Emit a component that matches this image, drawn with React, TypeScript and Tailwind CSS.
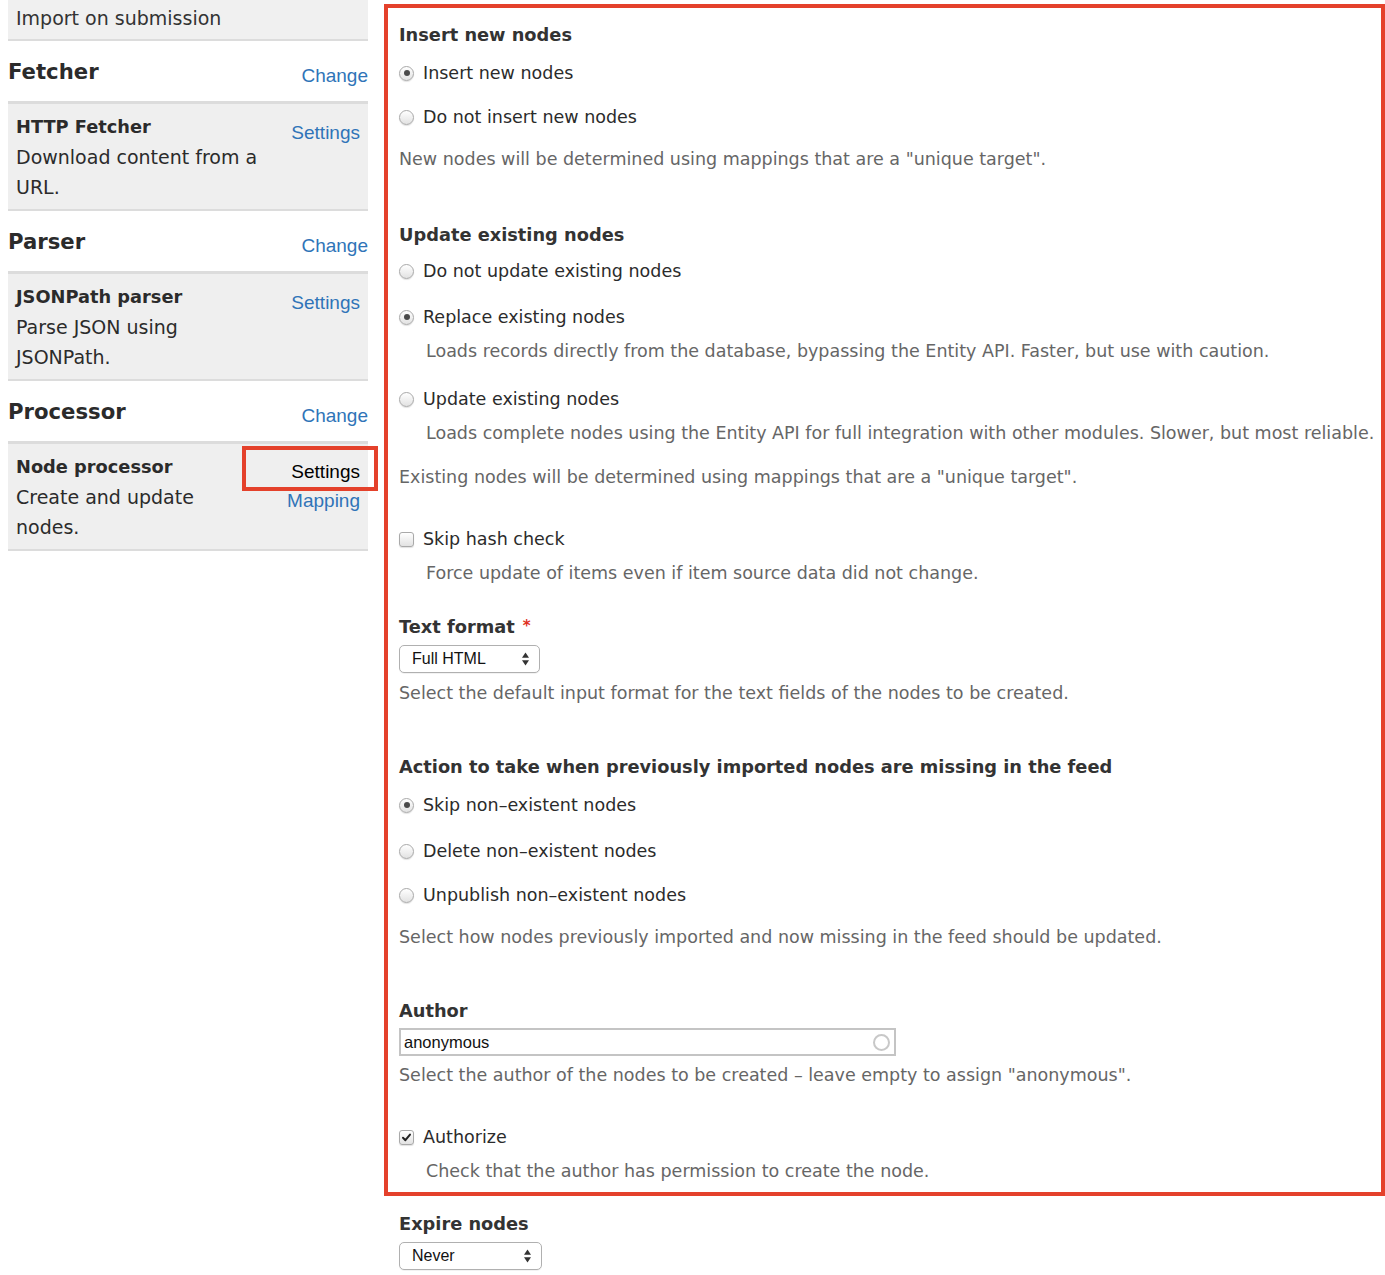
import React from 'react';

const Radio = ({ checked = false }: { checked?: boolean }) => (
    <span className="w-[15px] h-[15px] shrink-0 rounded-full border border-[#a9a9a9] bg-linear-to-b from-white to-[#e2e2e2] shadow-[0_1px_1px_rgba(0,0,0,0.12)] flex items-center justify-center">
        {checked && <span className="w-[6px] h-[6px] rounded-full bg-[#4a4a4a]" />}
    </span>
);

const Checkbox = ({ checked = false }: { checked?: boolean }) => (
    <span className="w-[15px] h-[15px] shrink-0 rounded-[3px] border border-[#a9a9a9] bg-linear-to-b from-white to-[#e2e2e2] shadow-[0_1px_1px_rgba(0,0,0,0.12)] flex items-center justify-center">
        {checked && (
            <svg width="11" height="11" viewBox="0 0 11 11">
                <path d="M2 5.8 L4.4 8.2 L9 2.6" fill="none" stroke="#222" strokeWidth="2" strokeLinecap="round" strokeLinejoin="round" />
            </svg>
        )}
    </span>
);

const Option = ({ label, checked, mt, box }: { label: string; checked?: boolean; mt: string; box?: boolean }) => (
    <div className={`h-6 flex items-center gap-[9px] text-[#2b2b2b] ${mt}`}>
        {box ? <Checkbox checked={checked} /> : <Radio checked={checked} />}
        <span>{label}</span>
    </div>
);

const Desc = ({ children, mt, indent }: { children: React.ReactNode; mt: string; indent?: boolean }) => (
    <div className={`h-6 flex items-center text-[#666] whitespace-nowrap ${indent ? 'pl-[27px]' : ''} ${mt}`}>{children}</div>
);

const Heading = ({ children, mt }: { children: React.ReactNode; mt: string }) => (
    <div className={`h-6 flex items-center font-bold text-[17.8px] text-[#333] ${mt}`}>{children}</div>
);

const Arrows = () => (
    <svg width="9" height="16" viewBox="0 0 9 16">
        <path d="M4.5 1.5 L8 6.8 L1 6.8 Z" fill="#333" />
        <path d="M4.5 14.5 L8 9.2 L1 9.2 Z" fill="#333" />
    </svg>
);

const Select = ({ value, w, mt }: { value: string; w: string; mt: string }) => (
    <div className={`h-[28px] ${w} ${mt} border border-[#b0b0b0] rounded-[5px] bg-white flex items-center justify-between pl-[12px] pr-[9px] font-['Liberation_Sans',Arial,sans-serif] text-[16px] text-[#111] shadow-[0_1px_0_rgba(0,0,0,0.05)]`}>
        <span>{value}</span>
        <Arrows />
    </div>
);

const SectionHeader = ({ title }: { title: string }) => (
    <div className="h-[60px] flex items-start justify-between">
        <span className="pt-[16px] leading-[30px] text-[21.2px] font-bold text-[#2b2b2b]">{title}</span>
        <a className="pt-[20px] leading-[30px] font-['Liberation_Sans',Arial,sans-serif] text-[19px] text-[#2f74b8]">Change</a>
    </div>
);

const Card = ({ title, lines, links }: { title: string; lines: string[]; links: React.ReactNode }) => (
    <div className="relative bg-[#efefef] border-t-[3px] border-b-2 border-[#dcdcdc] pt-[8px] pb-[7px] pl-[8px] pr-[8px] flex justify-between leading-[30px]">
        <div className="text-[#2b2b2b] whitespace-nowrap text-[19px]">
            <div className="font-bold text-[17.8px]">{title}</div>
            {lines.map((l) => (
                <div key={l}>{l}</div>
            ))}
        </div>
        <div className="flex flex-col items-end pt-[6px] font-['Liberation_Sans',Arial,sans-serif] text-[19px] leading-[30px]">{links}</div>
    </div>
);

export default function App() {
    return (
        <div className="w-[1385px] min-h-[1275px] bg-white font-['DejaVu_Sans',sans-serif] text-[17.5px] flex gap-[16px] pl-[8px]">
            {/* Left column */}
            <div className="w-[360px] shrink-0">
                <div className="h-[41px] bg-[#f0f0f0] border-b-2 border-[#dcdcdc] pl-[8px] flex items-center text-[19px] text-[#333] pb-[3px]">
                    Import on submission
                </div>
                <SectionHeader title="Fetcher" />
                <Card
                    title="HTTP Fetcher"
                    lines={['Download content from a', 'URL.']}
                    links={<a className="text-[#2f74b8]">Settings</a>}
                />
                <SectionHeader title="Parser" />
                <Card
                    title="JSONPath parser"
                    lines={['Parse JSON using', 'JSONPath.']}
                    links={<a className="text-[#2f74b8]">Settings</a>}
                />
                <SectionHeader title="Processor" />
                <Card
                    title="Node processor"
                    lines={['Create and update', 'nodes.']}
                    links={
                        <>
                            <a className="text-black relative -mt-[1px]">
                                Settings
                                <span className="absolute -left-[49px] -right-[18px] top-[-11px] bottom-[-4px] border-4 border-[#e4412b]" />
                            </a>
                            <a className="text-[#2f74b8] -mt-[1px]">Mapping</a>
                        </>
                    }
                />
            </div>

            {/* Right column */}
            <div className="flex-1">
                <div className="mt-[4px] border-4 border-[#e4412b] pl-[11px] pt-[15px] pb-[9px]">
                    <Heading mt="">Insert new nodes</Heading>
                    <Option label="Insert new nodes" checked mt="mt-[14px]" />
                    <Option label="Do not insert new nodes" mt="mt-[20px]" />
                    <Desc mt="mt-[18px]">New nodes will be determined using mappings that are a "unique target".</Desc>

                    <Heading mt="mt-[52px]">Update existing nodes</Heading>
                    <Option label="Do not update existing nodes" mt="mt-[12px]" />
                    <Option label="Replace existing nodes" checked mt="mt-[22px]" />
                    <Desc indent mt="mt-[10px]">
                        Loads records directly from the database, bypassing the Entity API. Faster, but use with caution.
                    </Desc>
                    <Option label="Update existing nodes" mt="mt-[24px]" />
                    <Desc indent mt="mt-[10px]">
                        Loads complete nodes using the Entity API for full integration with other modules. Slower, but most reliable.
                    </Desc>
                    <Desc mt="mt-[20px]">Existing nodes will be determined using mappings that are a "unique target".</Desc>

                    <Option label="Skip hash check" box mt="mt-[38px]" />
                    <Desc indent mt="mt-[10px]">Force update of items even if item source data did not change.</Desc>

                    <Heading mt="mt-[30px]">
                        Text format <span className="text-[#e0301e] ml-[8px] text-[15px] -mt-[2px]">*</span>
                    </Heading>
                    <Select value="Full HTML" w="w-[141px]" mt="mt-[6px]" />
                    <Desc mt="mt-[8px]">Select the default input format for the text fields of the nodes to be created.</Desc>

                    <Heading mt="mt-[50px]">Action to take when previously imported nodes are missing in the feed</Heading>
                    <Option label="Skip non–existent nodes" checked mt="mt-[14px]" />
                    <Option label="Delete non–existent nodes" mt="mt-[22px]" />
                    <Option label="Unpublish non–existent nodes" mt="mt-[20px]" />
                    <Desc mt="mt-[18px]">Select how nodes previously imported and now missing in the feed should be updated.</Desc>

                    <Heading mt="mt-[50px]">Author</Heading>
                    <div className="mt-[5px] w-[497px] h-[28px] border-2 border-[#c4c4c4] flex items-center justify-between pl-[3px] pr-[4px] font-['Liberation_Sans',Arial,sans-serif] text-[16.5px] text-[#111]">
                        <span>anonymous</span>
                        <span className="w-[17px] h-[17px] rounded-full border-2 border-[#c8c8c8]" />
                    </div>
                    <Desc mt="mt-[7px]">Select the author of the nodes to be created – leave empty to assign "anonymous".</Desc>

                    <Option label="Authorize" box checked mt="mt-[38px]" />
                    <Desc indent mt="mt-[10px]">Check that the author has permission to create the node.</Desc>
                </div>

                <div className="pl-[15px]">
                    <Heading mt="mt-[16px]">Expire nodes</Heading>
                    <Select value="Never" w="w-[143px]" mt="mt-[6px]" />
                </div>
            </div>
        </div>
    );
}
